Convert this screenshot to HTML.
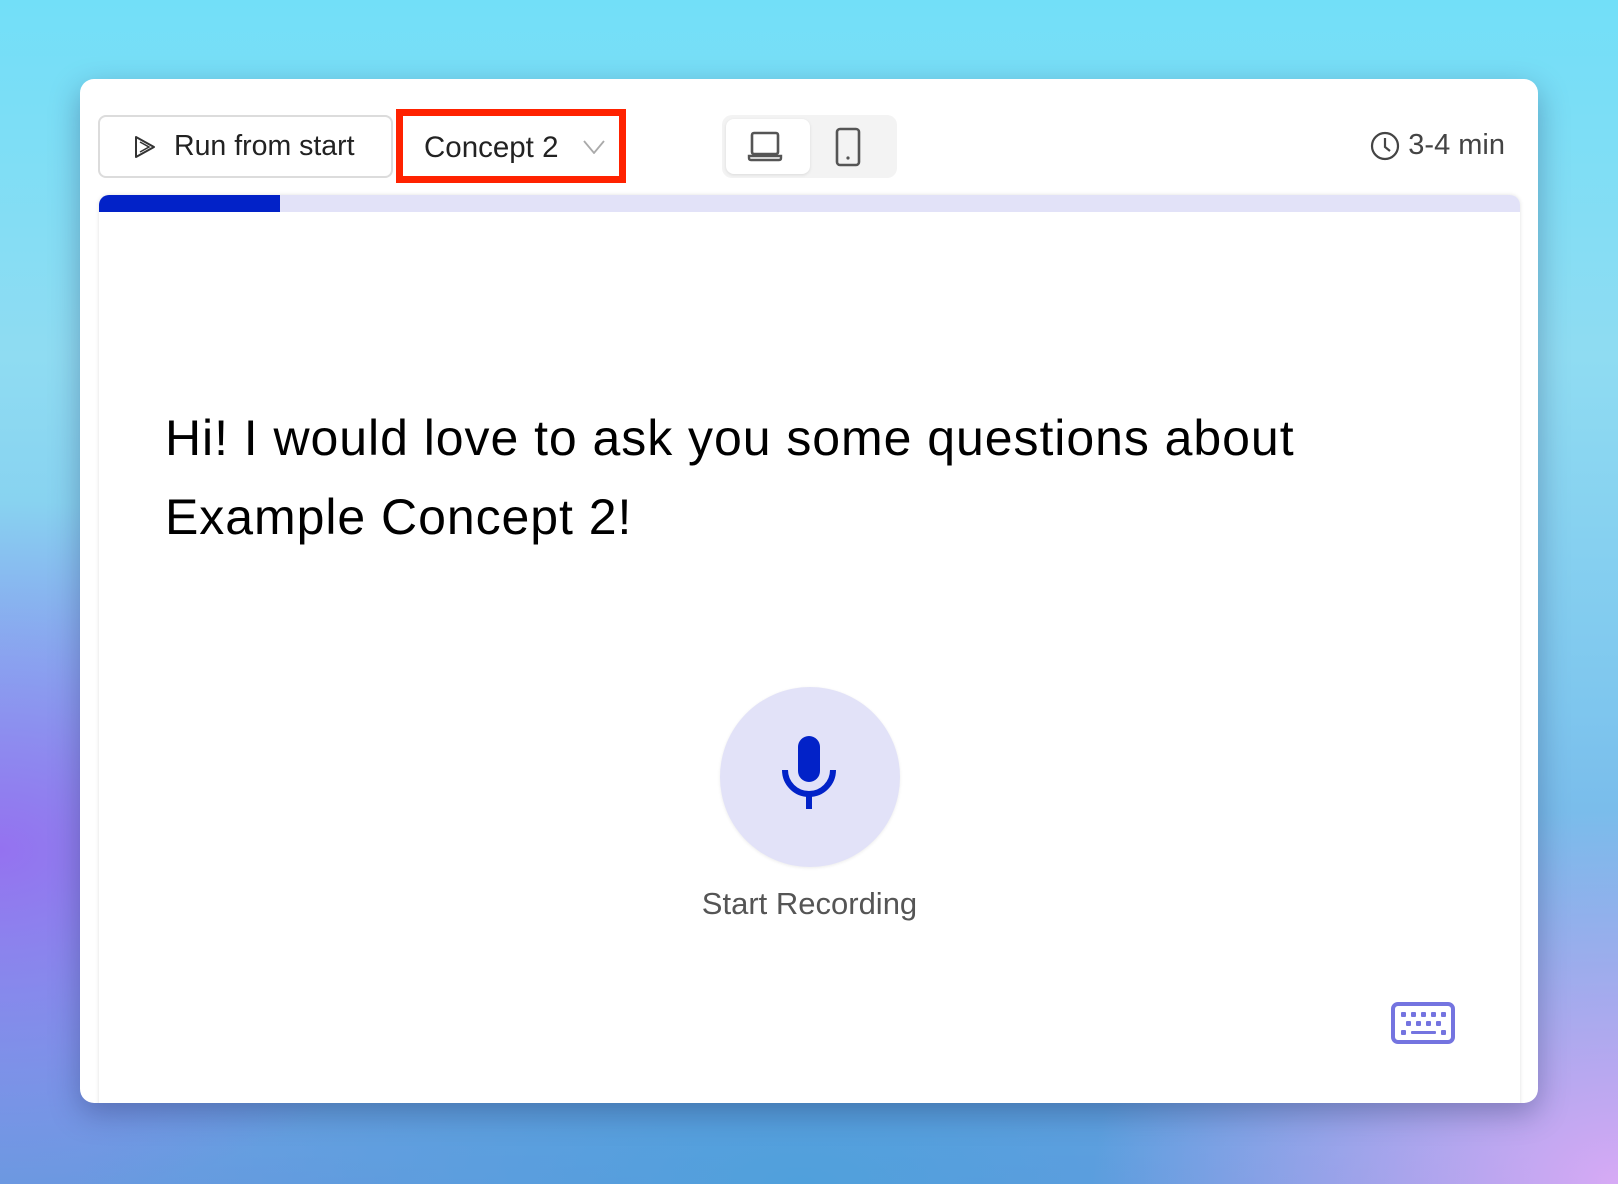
<!DOCTYPE html>
<html><head><meta charset="utf-8"><style>
*{margin:0;padding:0;box-sizing:border-box}
html,body{width:1618px;height:1184px;overflow:hidden}
body{font-family:"Liberation Sans",sans-serif;position:relative;
background:
radial-gradient(ellipse 700px 500px at 0px 850px,rgba(150,110,240,.95),rgba(150,110,240,0) 70%),
radial-gradient(ellipse 700px 500px at 1618px 1184px,rgba(215,170,245,1),rgba(215,170,245,0) 75%),
radial-gradient(ellipse 900px 400px at 800px 1184px,rgba(80,160,220,1),rgba(80,160,220,0) 80%),
linear-gradient(180deg,#72dff8 0%,#8fdcf2 30%,#7ec6ee 60%,#6a9ae0 100%);}
.card{position:absolute;left:80px;top:79px;width:1458px;height:1024px;background:#fff;border-radius:14px;box-shadow:0 10px 30px rgba(30,40,90,.35);overflow:hidden}
.run{position:absolute;left:18px;top:36px;width:295px;height:63px;border:2px solid #dcdcdc;border-radius:8px;font-size:28.5px;color:#222;display:flex;align-items:center;padding-left:32px;gap:16px}
.red{position:absolute;left:316px;top:30px;width:230px;height:74px;border:7px solid #ff2200}
.red span{position:absolute;left:21px;top:15px;font-size:29.5px;color:#222}
.tog{position:absolute;left:642px;top:36px;width:175px;height:63px;background:#f3f3f3;border-radius:10px}
.tog .sel{position:absolute;left:4px;top:4px;width:84px;height:55px;background:#fff;border-radius:8px;box-shadow:0 1px 3px rgba(0,0,0,.1)}
.time{position:absolute;right:33px;top:50px;font-size:29px;color:#444;display:flex;align-items:center;gap:8px}
.panel{position:absolute;left:19px;top:116px;width:1421px;height:950px;background:#fff;border-radius:10px 10px 0 0;box-shadow:0 0 4px rgba(0,0,0,.12);overflow:hidden}
.bar{position:absolute;left:0;top:0;width:100%;height:17px;background:#e2e2f8}
.bar i{position:absolute;left:0;top:0;width:181px;height:17px;background:#0222c8}
h1{position:absolute;left:66px;top:204px;font-weight:normal;font-size:50px;line-height:79px;color:#000;white-space:nowrap;letter-spacing:0.95px}
.mic{position:absolute;left:621px;top:492px;width:180px;height:180px;border-radius:50%;background:#e2e2f8;box-shadow:0 1px 3px rgba(0,0,0,.08)}
.sr{position:absolute;left:0;width:1421px;text-align:center;top:691px;font-size:31px;color:#555}
</style></head><body>
<div class="card">
 <div class="run"><svg width="26" height="26" viewBox="0 0 26 26"><path d="M4 3 L22 13 L4 23 Z" fill="none" stroke="#333" stroke-width="2" stroke-linejoin="round"/><path d="M8 8 L17 13 L8 18" fill="none" stroke="#333" stroke-width="1.5"/></svg>Run from start</div>
 <div class="red"><span>Concept 2</span><svg style="position:absolute;left:180px;top:24px" width="22" height="14" viewBox="0 0 22 14"><path d="M1 1 L11 13 L21 1" fill="none" stroke="#aaa" stroke-width="1.8"/></svg></div>
 <div class="tog"><div class="sel"></div>
  <svg style="position:absolute;left:25px;top:14px" width="36" height="34" viewBox="0 0 36 34"><rect x="5" y="4" width="26" height="21" rx="2" fill="none" stroke="#555" stroke-width="2.6"/><path d="M2 27 H34 V29 Q34 31 32 31 H4 Q2 31 2 29 Z" fill="none" stroke="#555" stroke-width="2.4"/></svg>
  <svg style="position:absolute;left:112px;top:12px" width="28" height="40" viewBox="0 0 28 40"><rect x="3" y="2" width="22" height="36" rx="3" fill="none" stroke="#555" stroke-width="2.6"/><circle cx="14" cy="31" r="1.6" fill="#555"/></svg>
 </div>
 <div class="time"><svg width="30" height="30" viewBox="0 0 30 30"><circle cx="15" cy="15" r="13" fill="none" stroke="#444" stroke-width="2.2"/><path d="M15 7 V16 L20 20" fill="none" stroke="#444" stroke-width="2.2"/></svg>3-4 min</div>
 <div class="panel">
  <div class="bar"><i></i></div>
  <h1>Hi! I would love to ask you some questions about<br>Example Concept 2!</h1>
  <div class="mic"><svg width="180" height="180" viewBox="0 0 180 180">
   <rect x="78" y="49" width="22" height="46" rx="11" fill="#0222c8"/>
   <path d="M65 83 A24 24 0 0 0 113 83" fill="none" stroke="#0222c8" stroke-width="6"/>
   <rect x="86" y="107" width="6" height="15" fill="#0222c8"/>
  </svg></div>
  <div class="sr">Start Recording</div>
  <svg style="position:absolute;left:1292px;top:807px" width="64" height="42" viewBox="0 0 64 42">
   <rect x="2" y="2" width="60" height="38" rx="5" fill="none" stroke="#7474e0" stroke-width="4"/>
   <g fill="#7474e0"><rect x="10" y="10" width="5" height="5" rx="1"/><rect x="20" y="10" width="5" height="5" rx="1"/><rect x="30" y="10" width="5" height="5" rx="1"/><rect x="40" y="10" width="5" height="5" rx="1"/><rect x="50" y="10" width="5" height="5" rx="1"/>
   <rect x="15" y="19" width="5" height="5" rx="1"/><rect x="25" y="19" width="5" height="5" rx="1"/><rect x="35" y="19" width="5" height="5" rx="1"/><rect x="45" y="19" width="5" height="5" rx="1"/>
   <rect x="10" y="28" width="5" height="5" rx="1"/><rect x="20" y="29" width="25" height="3" rx="1"/><rect x="50" y="28" width="5" height="5" rx="1"/></g>
  </svg>
 </div>
</div>
</body></html>
